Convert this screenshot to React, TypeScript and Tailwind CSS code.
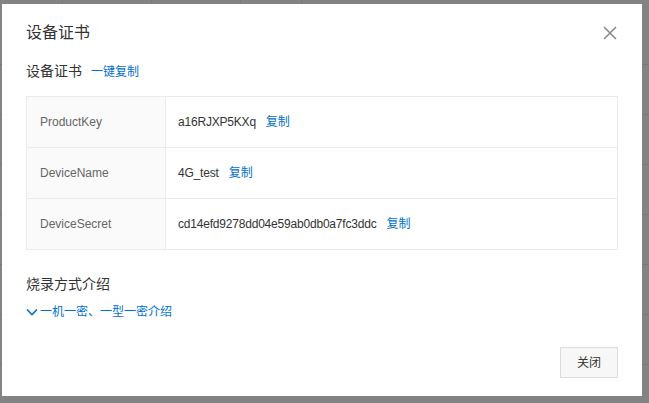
import React from "react";

const rows = [
  { k: "ProductKey", v: "a16RJXP5KXq" },
  { k: "DeviceName", v: "4G_test" },
  { k: "DeviceSecret", v: "cd14efd9278dd04e59ab0db0a7fc3ddc" },
];

export default function App() {
  const font = {
    fontFamily: '"Liberation Sans", "Noto Sans CJK SC", sans-serif',
  };
  return (
    <div className="relative w-[649px] h-[403px] overflow-hidden bg-[#838383]" style={font}>
      {/* underlying page seen through the mask */}
      <div className="flex flex-col pt-[64px]">
        {[0, 1, 2, 3, 4, 5, 6].map((i) => (
          <div key={i} className="h-[50px] border-t border-[#797979]" />
        ))}
      </div>
      <div className="absolute top-0 left-0 right-0 h-[4px] flex">
        <div className="w-[63px] border-r border-[#797979]" />
        <div className="w-[89px] border-r border-[#797979]" />
        <div className="w-[89px] border-r border-[#797979]" />
        <div className="w-[61px] border-r border-[#797979]" />
      </div>

      {/* dialog */}
      <div className="absolute left-[2px] top-[4px] w-[640px] h-[392px] bg-white px-[24px] pt-[20px] flex flex-col">
        <div className="flex items-center justify-between h-[18px]">
          <div className="text-[16px] leading-[18px] text-[#333]">设备证书</div>
          <svg width="14" height="14" viewBox="0 0 14 14" className="mr-[1px]">
            <path d="M1 1 L13 13 M13 1 L1 13" stroke="#8a8a8a" strokeWidth="1.6" fill="none" />
          </svg>
        </div>

        <div className="mt-[19px] flex items-center h-[20px]">
          <span className="text-[14px] leading-[20px] text-[#333]">设备证书</span>
          <span className="ml-[9px] text-[12px] leading-[20px] text-[#0070cc] mt-[1px]">一键复制</span>
        </div>

        <div className="mt-[15px] border border-[#ebebeb]">
          {rows.map((r, i) => (
            <div
              key={r.k}
              className={`flex ${i > 0 ? "h-[51px] border-t border-[#ebebeb]" : "h-[50px]"}`}
            >
              <div className="w-[139px] bg-[#fafafa] border-r border-[#ebebeb] flex items-center pl-[13px] text-[12px] text-[#666]">
                {r.k}
              </div>
              <div className="flex-1 flex items-center pl-[12px] text-[12px] text-[#333]">
                <span className="tracking-[-0.2px]">{r.v}</span>
                <span className="ml-[10px] text-[#0070cc]">复制</span>
              </div>
            </div>
          ))}
        </div>

        <div className="mt-[24px] text-[14px] leading-[20px] text-[#333]">烧录方式介绍</div>
        <div className="mt-[9px] flex items-center h-[18px] text-[12px] leading-[18px] text-[#0070cc]">
          <svg width="12" height="8" viewBox="0 0 12 8" className="mr-[2px]">
            <path d="M1 1.5 L6 6.5 L11 1.5" stroke="#0070cc" strokeWidth="1.6" fill="none" />
          </svg>
          <span>一机一密、一型一密介绍</span>
        </div>

        <div className="mt-[26px] flex justify-end">
          <div className="w-[58px] h-[31px] border border-[#dcdcdc] bg-[#f7f7f7] flex items-center justify-center text-[12px] text-[#333]">
            关闭
          </div>
        </div>
      </div>
    </div>
  );
}
